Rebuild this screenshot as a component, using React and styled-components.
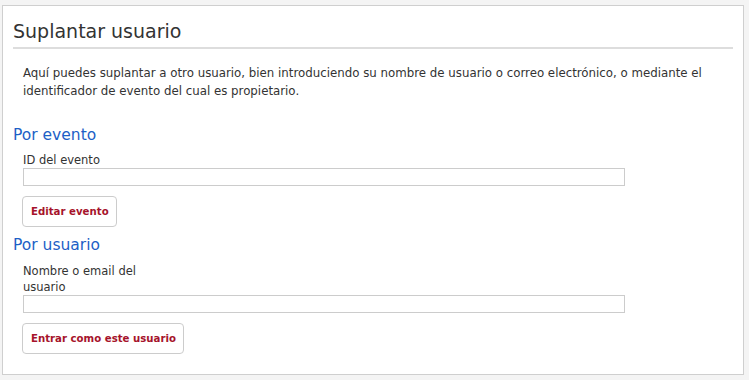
import React from 'react'
import styled, { createGlobalStyle } from 'styled-components'

const GlobalStyle = createGlobalStyle`
  body {
    margin: 0;
    background: #f4f4f4;
    font-family: "DejaVu Sans", Verdana, sans-serif;
    color: #333;
  }
`

const Styled = {}

Styled.panel = styled.div`
  box-sizing: border-box;
  display: flex;
  flex-direction: column;
  width: 742px;
  height: 370px;
  margin: 5px 0 0 2px;
  padding: 13px 10px 0 10px;
  background: #fff;
  border: 1px solid #cfcfcf;
`

Styled.title = styled.h1`
  margin: 0;
  padding: 0 0 4px 0;
  font-size: 19px;
  line-height: 24px;
  font-weight: normal;
  color: #333;
  border-bottom: 2px solid #dddddd;
`

Styled.intro = styled.p`
  margin: 15px 0 0 10px;
  font-size: 11.8px;
  line-height: 18px;
`

Styled.section = styled.h2`
  margin: ${(p) => p.$top}px 0 0 0;
  font-size: 15.5px;
  line-height: 20px;
  font-weight: normal;
  color: #1d5fc6;
`

Styled.field = styled.div`
  display: flex;
  flex-direction: column;
  align-items: flex-start;
  margin: ${(p) => p.$top}px 0 0 10px;
`

Styled.label = styled.label`
  width: 140px;
  font-size: 11.5px;
  line-height: 16px;
`

Styled.input = styled.input`
  box-sizing: border-box;
  width: 602px;
  height: 18px;
  margin: 0;
  padding: 1px 3px;
  border: 1px solid #cccccc;
  background: #fff;
  font-size: 11px;
`

Styled.button = styled.button`
  box-sizing: border-box;
  height: 31px;
  margin: 10px 0 0 -1px;
  padding: 0 7px 0 8px;
  background: #fff;
  border: 1px solid #cccccc;
  border-radius: 4px;
  font-family: "DejaVu Sans", Verdana, sans-serif;
  font-size: 10.2px;
  font-weight: bold;
  color: #a6132b;
`

const App = () => {
  return (
    <>
      <GlobalStyle />
      <Styled.panel>
        <Styled.title>Suplantar usuario</Styled.title>
        <Styled.intro>
          Aquí puedes suplantar a otro usuario, bien introduciendo su nombre de usuario o correo electrónico, o mediante el identificador de evento del cual es propietario.
        </Styled.intro>

        <Styled.section $top={25}>Por evento</Styled.section>
        <Styled.field $top={7}>
          <Styled.label htmlFor="event-id">ID del evento</Styled.label>
          <Styled.input id="event-id" type="text" />
          <Styled.button type="button">Editar evento</Styled.button>
        </Styled.field>

        <Styled.section $top={8}>Por usuario</Styled.section>
        <Styled.field $top={8}>
          <Styled.label htmlFor="user">Nombre o email del usuario</Styled.label>
          <Styled.input id="user" type="text" />
          <Styled.button type="button">Entrar como este usuario</Styled.button>
        </Styled.field>
      </Styled.panel>
    </>
  )
}

export default App
